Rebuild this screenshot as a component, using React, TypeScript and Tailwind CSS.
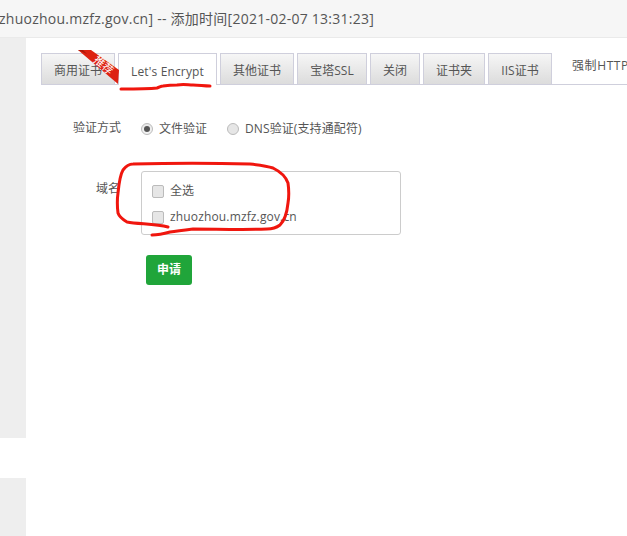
import React from "react";

const cjk = "font-['Open_Sans','Noto_Sans_CJK_SC',sans-serif]";

const tabs = [
  { label: "商用证书", width: "w-[74px]" },
  { label: "Let's Encrypt", width: "w-[99px]", active: true },
  { label: "其他证书", width: "w-[74px]" },
  { label: "宝塔SSL", width: "w-[70px]" },
  { label: "关闭", width: "w-[50px]" },
  { label: "证书夹", width: "w-[62px]" },
  { label: "IIS证书", width: "w-[64px]" },
];

const Tab: React.FC<{ label: string; width: string; active?: boolean }> = ({ label, width, active }) => (
  <div
    className={
      active
        ? `${width} shrink-0 h-[32px] -mb-px pt-[5px] flex items-center justify-center border border-b-0 border-[#cfcfdc] bg-white text-[12px] tracking-[0.15px] text-[#555]`
        : `${width} shrink-0 h-[31px] pt-[4px] flex items-center justify-center border border-b-0 border-[#cfcfdc] bg-gradient-to-b from-[#f6f6f6] to-[#dcdcdc] text-[12px] text-[#555]`
    }
  >
    {label}
  </div>
);

const Ribbon = () => (
  <div className="absolute left-[78px] top-[50px] w-[42px] h-[35px] overflow-hidden">
    <svg width="42" height="35" className="absolute left-0 top-0">
      <polygon points="0,0 13,0 41,20 40,34" fill="#dd2211" />
      <polygon points="0,0 5,0 9,4" fill="#a81808" />
    </svg>
    <span className="absolute left-[15px] top-[9px] text-[11px] leading-none text-white rotate-[40deg]">推荐</span>
  </div>
);

const Scribbles = () => (
  <svg className="absolute left-0 top-0 pointer-events-none" width="627" height="536" fill="none" stroke="#f0160e" strokeWidth="3" strokeLinecap="round" strokeLinejoin="round">
    <path d="M121 89 C133 89 148 89 157 88 C160 87 161 86 163 86 C170 85 172 85 177 85 C184 84 188 85 193 85 C199 85 204 86 210 86" />
    <path d="M168 227 C155 224 138 224 127 222 C122 219 119 216 118 213 C117 205 117 200 118 193 C119 183 120 175 123 170 C126 166 129 164 133 164 C170 163 215 163 250 164 C259 165 267 166 273 168 C281 172 286 177 288 183 C289 190 289 197 288 203 C287 213 284 221 280 225 C276 228 272 229 267 229 C245 230 215 229 193 229 C185 230 177 231 170 232 C163 234 157 235 152 235" />
  </svg>
);

export default function App() {
  return (
    <div className={`relative w-[627px] h-[536px] overflow-hidden bg-white ${cjk}`}>
      <div className="h-[38px] bg-[#f6f6f6] border-b border-[#eaeaea] flex items-center overflow-hidden">
        <span className="-ml-[1px] whitespace-nowrap text-[14px] tracking-[0.25px] text-[#555]">zhuozhou.mzfz.gov.cn] -- 添加时间[2021-02-07 13:31:23]</span>
      </div>

      <div className="flex h-[498px]">
        <div className="w-[26px] shrink-0 flex flex-col">
          <div className="h-[400px] bg-[#eeeeee]" />
          <div className="h-[40px] bg-white" />
          <div className="h-[58px] bg-[#eeeeee]" />
        </div>

        <div className="flex-1 min-w-0 pt-[15px] pl-[15px] overflow-hidden">
          <div className="h-[32px] flex items-end gap-[3px] border-b border-[#cfcfdc]">
            {tabs.map((t) => (
              <Tab key={t.label} {...t} />
            ))}
            <div className="ml-[17px] shrink-0 h-[31px] pb-[5px] flex items-center whitespace-nowrap text-[12px] tracking-[0.6px] text-[#555]">强制HTTPS</div>
          </div>

          <div className="mt-[34px] flex items-center h-[20px] text-[12px] text-[#555]">
            <div className="w-[65px] pl-[32px] shrink-0 whitespace-nowrap -mt-[2px]">验证方式</div>
            <div className="ml-[35px] flex items-center gap-[6px]">
              <span className="w-[12px] h-[12px] rounded-full border border-[#bbb] bg-gradient-to-b from-[#e8e8e8] to-[#f4f4f4] flex items-center justify-center">
                <span className="w-[6px] h-[6px] rounded-full bg-[#555]" />
              </span>
              <span>文件验证</span>
            </div>
            <div className="ml-[20px] flex items-center gap-[6px]">
              <span className="w-[12px] h-[12px] rounded-full border border-[#bbb] bg-[#e6e6e6]" />
              <span className="tracking-[0.1px]">DNS验证(支持通配符)</span>
            </div>
          </div>

          <div className="mt-[32px] flex items-start">
            <div className="w-[100px] pr-[21px] pt-[9px] text-right text-[12px] leading-[18px] text-[#555]">域名</div>
            <div className="w-[260px] h-[64px] rounded-[3px] border border-[#cccccc] pl-[10px] text-[12px] text-[#555]">
              <div className="h-[26px] mt-[6px] flex items-center gap-[6px]">
                <span className="w-[12px] h-[13px] rounded-[2px] border border-[#bbb] bg-[#e6e6e6]" />
                <span>全选</span>
              </div>
              <div className="h-[26px] flex items-center gap-[6px]">
                <span className="w-[12px] h-[13px] rounded-[2px] border border-[#bbb] bg-[#e6e6e6]" />
                <span className="tracking-[0.15px]">zhuozhou.mzfz.gov.cn</span>
              </div>
            </div>
          </div>

          <button className="ml-[105px] mt-[20px] w-[46px] h-[30px] rounded-[3px] bg-[#20a53a] text-[12px] font-bold text-white">申请</button>
        </div>
      </div>

      <Ribbon />
      <Scribbles />
    </div>
  );
}
